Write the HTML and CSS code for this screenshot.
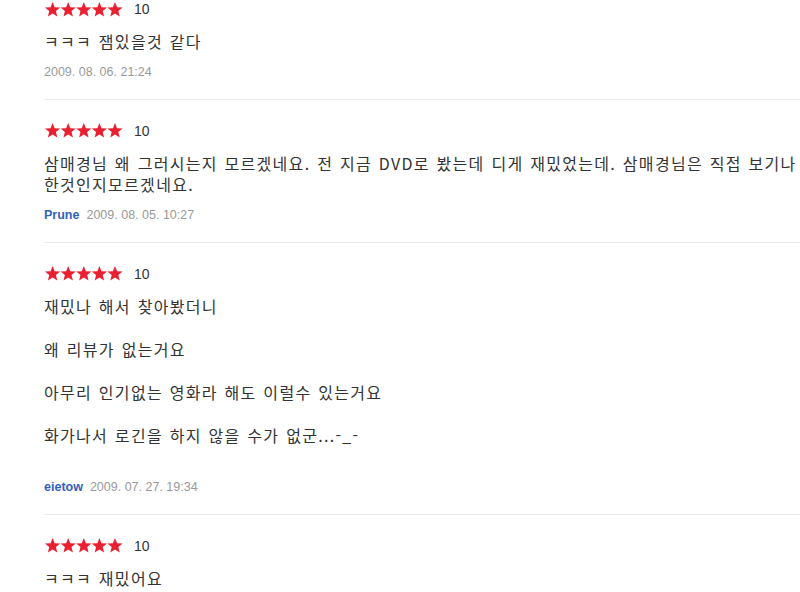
FILE: index.html
```html
<!DOCTYPE html>
<html lang="ko">
<head>
<meta charset="utf-8">
<title>리뷰</title>
<link rel="stylesheet" href="styles.css">
</head>
<body>
<svg class="defs" width="0" height="0" aria-hidden="true">
  <defs>
    <path id="star" d="M0,-8 L2.06,-2.83 L7.61,-2.47 L3.33,1.08 L4.70,6.47 L0,3.5 L-4.70,6.47 L-3.33,1.08 L-7.61,-2.47 L-2.06,-2.83 Z"/>
  </defs>
</svg>
<ul class="reviews">
  <li class="review">
    <div class="rating">
      <svg class="stars" viewBox="0 0 80 15" width="80" height="15"><use href="#star" x="8.6" y="8"/><use href="#star" x="24.2" y="8"/><use href="#star" x="39.8" y="8"/><use href="#star" x="55.4" y="8"/><use href="#star" x="71" y="8"/></svg>
      <span class="score">10</span>
    </div>
    <div class="body"><p>ㅋㅋㅋ 잼있을것 같다</p></div>
    <div class="meta"><span class="date">2009. 08. 06. 21:24</span></div>
  </li>
  <li class="review">
    <div class="rating">
      <svg class="stars" viewBox="0 0 80 15" width="80" height="15"><use href="#star" x="8.6" y="8"/><use href="#star" x="24.2" y="8"/><use href="#star" x="39.8" y="8"/><use href="#star" x="55.4" y="8"/><use href="#star" x="71" y="8"/></svg>
      <span class="score">10</span>
    </div>
    <div class="body"><p>삼매경님 왜 그러시는지 모르겠네요. 전 지금 DVD로 봤는데 디게 재밌었는데. 삼매경님은 직접 보기나<br>한것인지모르겠네요.</p></div>
    <div class="meta"><span class="author">Prune</span><span class="date">2009. 08. 05. 10:27</span></div>
  </li>
  <li class="review">
    <div class="rating">
      <svg class="stars" viewBox="0 0 80 15" width="80" height="15"><use href="#star" x="8.6" y="8"/><use href="#star" x="24.2" y="8"/><use href="#star" x="39.8" y="8"/><use href="#star" x="55.4" y="8"/><use href="#star" x="71" y="8"/></svg>
      <span class="score">10</span>
    </div>
    <div class="body spaced">
      <p>재밌나 해서 찾아봤더니</p>
      <p>왜 리뷰가 없는거요</p>
      <p>아무리 인기없는 영화라 해도 이럴수 있는거요</p>
      <p>화가나서 로긴을 하지 않을 수가 없군...-_-</p>
    </div>
    <div class="meta"><span class="author">eietow</span><span class="date">2009. 07. 27. 19:34</span></div>
  </li>
  <li class="review">
    <div class="rating">
      <svg class="stars" viewBox="0 0 80 15" width="80" height="15"><use href="#star" x="8.6" y="8"/><use href="#star" x="24.2" y="8"/><use href="#star" x="39.8" y="8"/><use href="#star" x="55.4" y="8"/><use href="#star" x="71" y="8"/></svg>
      <span class="score">10</span>
    </div>
    <div class="body"><p>ㅋㅋㅋ 재밌어요</p></div>
    <div class="meta"><span class="date">2009. 07. 20. 11:02</span></div>
  </li>
</ul>
</body>
</html>
```

FILE: styles.css
```css
html, body {
  margin: 0;
  padding: 0;
  background: #ffffff;
  overflow: hidden;
}

body {
  width: 800px;
  height: 592px;
  font-family: "Noto Sans CJK KR", "Liberation Sans", sans-serif;
  color: #333333;
}

.defs {
  position: absolute;
  width: 0;
  height: 0;
}

.reviews {
  list-style: none;
  margin: -22px 0 0 0;
  padding: 0 0 0 44px;
}

.review {
  padding: 21px 0 18px 0;
  border-bottom: 1px solid #ebebeb;
}

.rating {
  display: flex;
  align-items: center;
  height: 20px;
}

.stars {
  display: block;
  fill: #e8202f;
}

.score {
  margin-left: 10px;
  font-family: "Liberation Sans", Arial, sans-serif;
  font-size: 14px;
  color: #333333;
  line-height: 20px;
}

.body {
  display: flow-root;
  margin-top: 12px;
  font-size: 16px;
  line-height: 21.5px;
  letter-spacing: 1.3px;
  word-spacing: 1px;
  color: #333333;
}

.body p {
  margin: 0;
  white-space: nowrap;
}

.body.spaced p {
  margin-bottom: 21.5px;
}

.meta {
  margin-top: 10px;
  display: flex;
  align-items: center;
  height: 18px;
  font-family: "Liberation Sans", Arial, sans-serif;
  font-size: 12.5px;
  line-height: 18px;
}

.author {
  font-weight: bold;
  color: #3460bd;
  margin-right: 7px;
}

.date {
  color: #999999;
}
```
